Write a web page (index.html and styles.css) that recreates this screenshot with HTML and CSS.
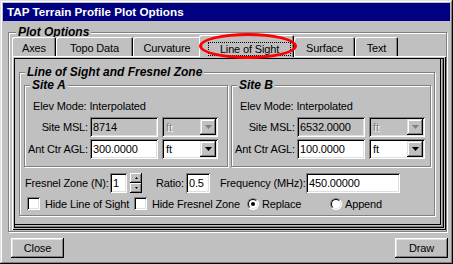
FILE: index.html
```html
<!DOCTYPE html>
<html lang="en">
<head>
  <meta charset="UTF-8">
  <title>TAP Terrain Profile Plot Options</title>
  <link rel="stylesheet" href="styles.css">
</head>
<body>
  <div class="window">
    <div class="titlebar">TAP Terrain Profile Plot Options</div>

    <!-- Plot Options group -->
    <div class="group plot-options">
      <span class="group-title">Plot Options</span>
      <div class="tabs">
        <div class="tab tab-axes">Axes</div>
        <div class="tab tab-topo">Topo Data</div>
        <div class="tab tab-curv">Curvature</div>
        <div class="tab tab-los active"><span class="focus">Line of Sight</span></div>
        <div class="tab tab-surface">Surface</div>
        <div class="tab tab-text">Text</div>
      </div>

      <div class="panel">
        <div class="group los">
          <span class="group-title">Line of Sight and Fresnel Zone</span>

          <div class="sites">
            <!-- Site A -->
            <div class="group site site-a">
              <span class="group-title">Site A</span>
              <div class="elev">Elev Mode: Interpolated</div>
              <div class="field-row">
                <span class="label">Site MSL:</span>
                <span class="textbox disabled">8714</span>
                <span class="combo disabled">
                  <span class="combo-value">ft</span>
                  <span class="combo-btn"><svg width="7" height="4" viewBox="0 0 7 4"><polygon points="0,0 7,0 3.5,4"/></svg></span>
                </span>
              </div>
              <div class="field-row">
                <span class="label">Ant Ctr AGL:</span>
                <span class="textbox">300.0000</span>
                <span class="combo">
                  <span class="combo-value">ft</span>
                  <span class="combo-btn"><svg width="7" height="4" viewBox="0 0 7 4"><polygon points="0,0 7,0 3.5,4"/></svg></span>
                </span>
              </div>
            </div>

            <!-- Site B -->
            <div class="group site site-b">
              <span class="group-title">Site B</span>
              <div class="elev">Elev Mode: Interpolated</div>
              <div class="field-row">
                <span class="label">Site MSL:</span>
                <span class="textbox disabled">6532.0000</span>
                <span class="combo disabled">
                  <span class="combo-value">ft</span>
                  <span class="combo-btn"><svg width="7" height="4" viewBox="0 0 7 4"><polygon points="0,0 7,0 3.5,4"/></svg></span>
                </span>
              </div>
              <div class="field-row">
                <span class="label">Ant Ctr AGL:</span>
                <span class="textbox">100.0000</span>
                <span class="combo">
                  <span class="combo-value">ft</span>
                  <span class="combo-btn"><svg width="7" height="4" viewBox="0 0 7 4"><polygon points="0,0 7,0 3.5,4"/></svg></span>
                </span>
              </div>
            </div>
          </div>

          <div class="fresnel-row">
            <span class="fz-label">Fresnel Zone (N):</span>
            <span class="textbox fz-input">1</span>
            <span class="spinner">
              <span class="spin-btn"><svg width="3" height="2" viewBox="0 0 3 2"><polygon points="1.5,0 3,2 0,2"/></svg></span>
              <span class="spin-btn"><svg width="3" height="2" viewBox="0 0 3 2"><polygon points="0,0 3,0 1.5,2"/></svg></span>
            </span>
            <span class="ratio-label">Ratio:</span>
            <span class="textbox ratio-input">0.5</span>
            <span class="freq-label">Frequency (MHz):</span>
            <span class="textbox freq-input">450.00000</span>
          </div>

          <div class="option-row">
            <span class="option opt-los"><span class="checkbox"></span>Hide Line of Sight</span>
            <span class="option opt-fz"><span class="checkbox"></span>Hide Fresnel Zone</span>
            <span class="option opt-replace"><span class="radio checked"></span>Replace</span>
            <span class="option opt-append"><span class="radio"></span>Append</span>
          </div>
        </div>
      </div>
    </div>

    <div class="buttons">
      <button class="btn">Close</button>
      <button class="btn">Draw</button>
    </div>

    <!-- red annotation round the active tab -->
    <div class="highlight"></div>
  </div>
</body>
</html>
```

FILE: styles.css
```css
/* General Styles */
* {
  box-sizing: border-box;
}

body {
  margin: 0;
  background-color: #c0c0c0;
  font-family: "Liberation Sans", Arial, sans-serif;
  font-size: 11px;
  letter-spacing: -0.15px;
  color: #000;
}

.window {
  position: relative;
  width: 453px;
  height: 264px;
  padding: 3px;
  box-shadow: inset -1px -1px #000, inset 1px 1px #dfdfdf,
              inset -2px -2px #808080, inset 2px 2px #fff;
}

.titlebar {
  height: 18px;
  padding-left: 4px;
  background-color: #000080;
  color: #fff;
  font-weight: bold;
  font-size: 11.7px;
  letter-spacing: 0;
  line-height: 18px;
  white-space: nowrap;
}

/* Etched group boxes */
.group {
  position: relative;
  border: 1px solid #808080;
  box-shadow: inset 1px 1px #fff, 1px 1px #fff;
}

.group-title {
  position: absolute;
  top: -8px;
  left: 5px;
  padding: 0 2px;
  background-color: #c0c0c0;
  font-weight: bold;
  font-style: italic;
  font-size: 12px;
  letter-spacing: 0;
  line-height: 14px;
  white-space: nowrap;
}

.plot-options {
  margin: 11px 3px 0 5px;
  padding: 2px 0 1px 3px;
}

.plot-options > .group-title {
  left: 7px;
}

/* Tabs */
.tabs {
  display: flex;
  align-items: flex-end;
  height: 21px;
  position: relative;
  z-index: 1;
}

.tab {
  height: 19px;
  padding-top: 4px;
  text-align: center;
  line-height: 14px;
  border-radius: 2px 2px 0 0;
  background-color: #c0c0c0;
  box-shadow: inset 1px 1px #fff, inset -1px 0 #000, inset -2px 0 #808080;
  white-space: nowrap;
}

.tab-axes { width: 44px; }
.tab-topo { width: 77px; }
.tab-curv { width: 68px; }
.tab-surface { width: 61px; }
.tab-text { width: 43px; }

.tab.active {
  width: 95px;
  height: 22px;
  margin: 0 0 -1px -2px;
  padding: 7px 3px 0 9px;
}

.focus {
  display: block;
  height: 14px;
  border: 1px dotted #000;
  line-height: 13px;
}

.panel {
  padding: 16px 11px 14px 7px;
  box-shadow: inset 1px 1px #fff, inset -1px -1px #000,
              inset 2px 2px #c0c0c0, inset -2px -2px #c0c0c0,
              inset 3px 3px #000, inset -3px -3px #000,
              inset -4px -4px #808080, inset -5px -5px #c0c0c0,
              inset -6px -6px #000;
}

/* Line of Sight group */
.los {
  padding: 12px 3px 5px 4px;
}

.sites {
  display: flex;
  gap: 3px;
}

.site {
  padding-bottom: 7px;
}

.site-a { width: 204px; }
.site-b { width: 200px; }

.elev {
  margin: 14px 0 0 8px;
  line-height: 13px;
  white-space: nowrap;
}

.field-row {
  display: flex;
  align-items: center;
  height: 20px;
  margin-top: 2px;
}

.elev + .field-row {
  margin-top: 4px;
}

.label {
  display: flex;
  justify-content: flex-end;
  width: 63px;
  margin-right: 2px;
  white-space: nowrap;
}

/* Sunken fields */
.textbox,
.combo {
  height: 20px;
  background-color: #fff;
  box-shadow: inset 1px 1px #808080, inset -1px -1px #fff,
              inset 2px 2px #000, inset -2px -2px #dfdfdf;
  line-height: 20px;
  padding-left: 3px;
  white-space: nowrap;
}

.field-row .textbox {
  width: 68px;
}

.textbox.disabled {
  background-color: #c0c0c0;
}

.combo {
  display: flex;
  justify-content: space-between;
  width: 56px;
  margin-left: 4px;
  padding: 2px;
}

.combo-value {
  padding-left: 2px;
  line-height: 16px;
}

.combo.disabled {
  background-color: #c0c0c0;
}

.combo.disabled .combo-value {
  color: #808080;
  text-shadow: 1px 1px #fff;
}

.combo-btn {
  display: flex;
  align-items: center;
  justify-content: center;
  width: 16px;
  height: 16px;
  background-color: #c0c0c0;
  box-shadow: inset -1px -1px #000, inset 1px 1px #dfdfdf,
              inset -2px -2px #808080, inset 2px 2px #fff;
}

.combo.disabled .combo-btn svg {
  fill: #808080;
}

/* Fresnel row */
.fresnel-row {
  display: flex;
  align-items: center;
  height: 20px;
  margin-top: 6px;
  white-space: nowrap;
}

.fz-label { width: 85px; margin-left: 1px; }
.fz-input { width: 17px; }
.ratio-label { width: 30px; margin-left: 14px; }
.ratio-input { width: 24px; }
.freq-label { width: 86px; margin-left: 10px; }
.freq-input { width: 94px; }

.spinner {
  display: flex;
  flex-direction: column;
  margin-left: 3px;
}

.spin-btn {
  display: flex;
  align-items: center;
  justify-content: center;
  width: 12px;
  height: 10px;
  box-shadow: inset -1px -1px #000, inset 1px 1px #fff, inset -2px -2px #808080;
}

/* Check boxes and radios */
.option-row {
  display: flex;
  align-items: center;
  height: 13px;
  margin-top: 4px;
  white-space: nowrap;
}

.option {
  display: flex;
  align-items: center;
}

.opt-los { width: 107px; margin-left: 3px; }
.opt-fz { width: 113px; }
.opt-replace { width: 83px; }

.checkbox {
  width: 13px;
  height: 13px;
  margin-right: 5px;
  background-color: #fff;
  box-shadow: inset 1px 1px #808080, inset -1px -1px #fff,
              inset 2px 2px #000, inset -2px -2px #dfdfdf;
}

.radio {
  position: relative;
  width: 12px;
  height: 12px;
  margin-right: 3px;
  border-radius: 50%;
  background-color: #fff;
  border: 1px solid;
  border-color: #808080 #fff #fff #808080;
}

.radio::before {
  content: "";
  position: absolute;
  inset: 0;
  border-radius: 50%;
  border: 1px solid;
  border-color: #000 #dfdfdf #dfdfdf #000;
}

.radio.checked::after {
  content: "";
  position: absolute;
  left: 3px;
  top: 3px;
  width: 4px;
  height: 4px;
  border-radius: 50%;
  background-color: #000;
}

/* Bottom buttons */
.buttons {
  display: flex;
  justify-content: space-between;
  margin: 6px 2px 0 8px;
}

.btn {
  width: 53px;
  height: 20px;
  padding: 0;
  border: none;
  background-color: #c0c0c0;
  font-family: "Liberation Sans", Arial, sans-serif;
  font-size: 11px;
  letter-spacing: -0.15px;
  color: #000;
  box-shadow: inset -1px -1px #000, inset 1px 1px #fff,
              inset -2px -2px #808080, inset 2px 2px #dfdfdf;
}

.highlight {
  position: absolute;
  left: 199px;
  top: 33px;
  width: 98px;
  height: 26px;
  border: 3px solid #f00;
  border-radius: 50%;
  z-index: 2;
}
```
